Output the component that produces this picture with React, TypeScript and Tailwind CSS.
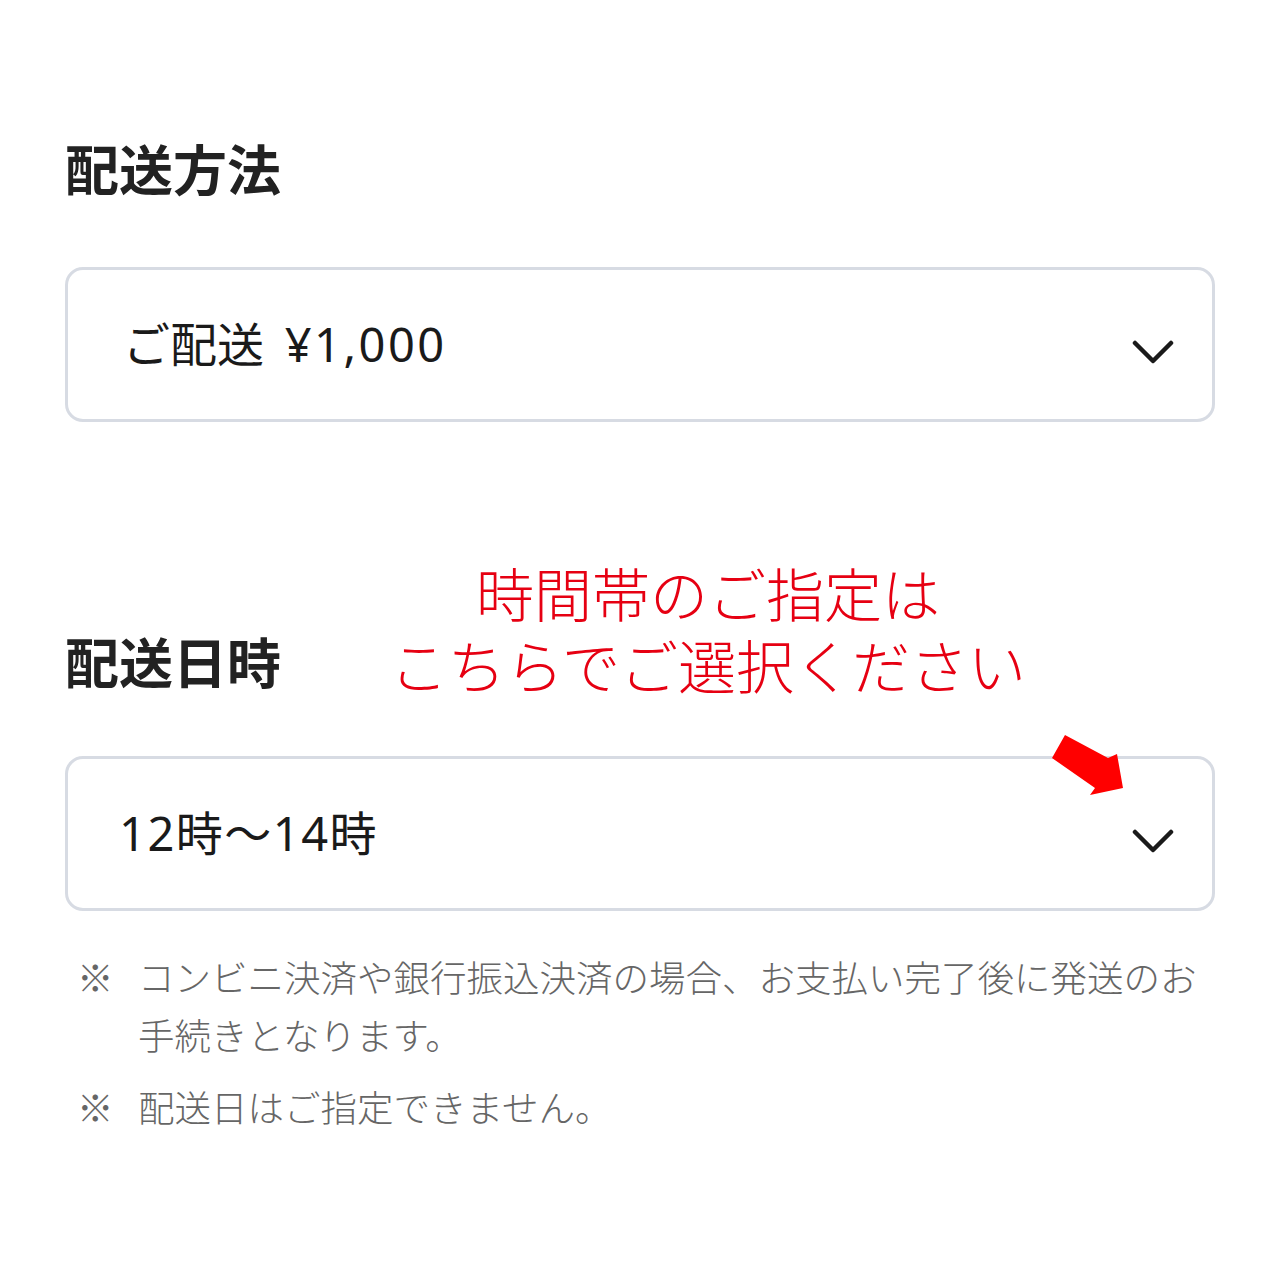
import React from "react";

const font = { fontFamily: '"Noto Sans CJK JP", "Noto Sans", sans-serif' };
const labelFont = { fontFamily: '"Noto Sans", "Noto Sans CJK JP", sans-serif' };

function Chevron() {
  return (
    <svg className="mt-[14px]" width="42" height="28" viewBox="0 0 42 28" fill="none">
      <path d="M3 5 L21 23 L39 5" stroke="#1a1a1a" strokeWidth="4.5" strokeLinecap="round" strokeLinejoin="round" />
    </svg>
  );
}

function SelectBox({ children, pl }: { children: React.ReactNode; pl: string }) {
  return (
    <div className={`flex h-[155px] items-center justify-between rounded-[18px] border-[3px] border-[#d7dbe3] bg-white pr-[38px] ${pl}`}>
      <span className="text-[47px] leading-none text-[#1a1a1a]" style={labelFont}>{children}</span>
      <Chevron />
    </div>
  );
}

export default function App() {
  return (
    <div className="min-h-[1280px] w-[1280px] bg-white" style={font}>
      <div className="px-[65px] pt-[141px]">
        <h2 className="text-[54px] font-bold leading-none text-[#222]">配送方法</h2>
        <div className="mt-[72px]">
          <SelectBox pl="pl-[55px]">
            ご配送<span className="ml-[6px] tracking-[2.5px]"> ¥1,000</span>
          </SelectBox>
        </div>

        <div className="relative mt-[212px]">
          <h2 className="w-fit text-[54px] font-bold leading-none text-[#222]">配送日時</h2>
          <div className="absolute left-[323px] top-[-78px] w-[640px] text-center text-[58px] font-light leading-[72px] text-[#e60012]">
            <div>時間帯のご指定は</div>
            <div>こちらでご選択ください</div>
          </div>
        </div>

        <div className="relative mt-[68px]">
          <SelectBox pl="pl-[51px]">
            <span className="tracking-[1.5px]">12時〜14時</span>
          </SelectBox>
          <svg className="absolute left-[975px] top-[-31px]" width="90" height="75" viewBox="0 0 90 75">
            <polygon points="25,10 68,33 77,29 83,63 50,70 55,63 12,33" fill="#ff0000" />
          </svg>
        </div>

        <div className="mt-[37px] text-[36.5px] font-light leading-[58px] text-[#666]">
          <div className="flex">
            <span className="w-[73px] shrink-0 pl-[12px]">※</span>
            <span>コンビニ決済や銀行振込決済の場合、お支払い完了後に発送のお手続きとなります。</span>
          </div>
          <div className="mt-[14px] flex">
            <span className="w-[73px] shrink-0 pl-[12px]">※</span>
            <span>配送日はご指定できません。</span>
          </div>
        </div>
      </div>
    </div>
  );
}
